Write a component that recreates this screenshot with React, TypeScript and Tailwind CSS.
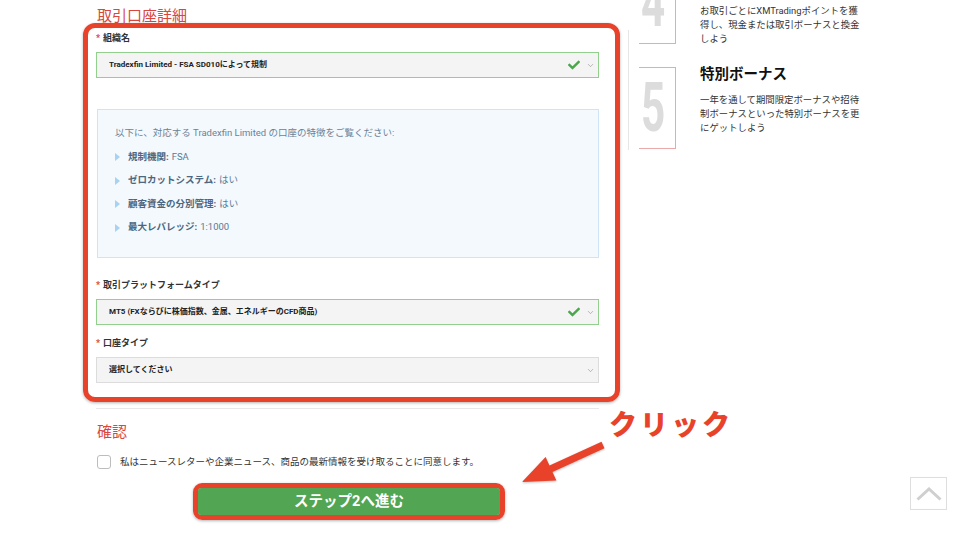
import React from 'react';
import { FaCheck } from 'react-icons/fa';
import { ChevronDown } from 'lucide-react';

const Label: React.FC<{ text: string }> = ({ text }) => (
  <div className="text-[9px] leading-[16px] font-bold text-[#333]">
    <span className="text-[#d9463e] mr-[3px]">*</span>
    {text}
  </div>
);

const Select: React.FC<{ text: string; valid?: boolean }> = ({ text, valid }) => (
  <div
    className={`h-[26px] flex items-center pl-[12px] pr-[3px] bg-[#f4f4f4] border ${
      valid ? 'border-[#94d08d]' : 'border-[#dcdcdc]'
    }`}
  >
    <span className="flex-1 text-[8px] font-bold text-[#222] truncate">{text}</span>
    {valid && <FaCheck className="text-[#4ca64c] mr-[6px]" size={12} />}
    <ChevronDown className="text-[#888]" size={9} strokeWidth={1.5} />
  </div>
);

const Feature: React.FC<{ label: string; value: string }> = ({ label, value }) => (
  <div className="flex items-center h-[16px] text-[9.5px] text-[#5d7891]">
    <span className="w-0 h-0 border-y-[4px] border-y-transparent border-l-[5px] border-l-[#a7d2f2] mr-[8px]" />
    <span className="font-bold text-[#4c6781]">{label}:</span>
    <span className="ml-[3px]">{value}</span>
  </div>
);

export default function App() {
  return (
    <div className="relative w-[960px] h-[547px] overflow-hidden bg-white font-['Roboto','Noto_Sans_CJK_JP',sans-serif]">
      <div className="flex">
        {/* Left: form */}
        <div className="ml-[96px] w-[503px] shrink-0">
          <h2 className="pt-[4px] text-[15px] leading-[24px] text-[#d9463e] pl-[1px]">取引口座詳細</h2>
          <div className="mt-[2px]">
            <Label text="組織名" />
          </div>
          <div className="mt-[6px]">
            <Select text="Tradexfin Limited - FSA SD010によって規制" valid />
          </div>

          <div className="mt-[31px] ml-[1px] h-[149px] border border-[#cde5f7] bg-[#f4f9fd] pl-[17px] pt-[15px]">
            <p className="text-[9.5px] leading-[16px] text-[#6a8399]">
              以下に、対応する Tradexfin Limited の口座の特徴をご覧ください:
            </p>
            <div className="mt-[8px] flex flex-col gap-[7.5px]">
              <Feature label="規制機関" value="FSA" />
              <Feature label="ゼロカットシステム" value="はい" />
              <Feature label="顧客資金の分別管理" value="はい" />
              <Feature label="最大レバレッジ" value="1:1000" />
            </div>
          </div>

          <div className="mt-[19px]">
            <Label text="取引プラットフォームタイプ" />
          </div>
          <div className="mt-[6px]">
            <Select text="MT5 (FXならびに株価指数、金属、エネルギーのCFD商品)" valid />
          </div>
          <div className="mt-[10px]">
            <Label text="口座タイプ" />
          </div>
          <div className="mt-[6px]">
            <Select text="選択してください" />
          </div>

          <div className="mt-[25px] border-t border-[#e8e8e8]" />

          <h2 className="mt-[13px] pl-[1px] text-[15px] leading-[20px] text-[#d9463e]">確認</h2>
          <div className="mt-[13px] flex items-center h-[14px] pl-[1px]">
            <span className="w-[14px] h-[14px] border border-[#bdbdbd] rounded-[3px] bg-white shrink-0" />
            <span className="ml-[9px] text-[9.5px] text-[#333]">
              私はニュースレターや企業ニュース、商品の最新情報を受け取ることに同意します。
            </span>
          </div>

          <div className="mt-[14px] ml-[97px] w-[312px] border-[5px] border-[#e8432a] rounded-[9px] shadow-[0_1px_3px_rgba(0,0,0,0.3)]">
            <button className="w-full h-[27px] bg-[#52a552] rounded-[3px] text-white text-[14.5px] font-bold flex items-center justify-center">
              ステップ2へ進む
            </button>
          </div>
        </div>

        {/* Right: steps */}
        <div className="relative ml-[29px] w-[260px]">
          <div className="absolute left-0 top-[30px] h-[120px] w-px bg-[#e6e6e6]" />
          <div className="pl-[11px]">
            <div className="flex h-[82px] mt-[-38px]">
              <div className="w-[37px] h-[82px] shrink-0 border-y border-r border-[#eaa9a9] pt-[16px] overflow-hidden">
                <div className="text-[68px] leading-[49px] font-bold text-[#dcdcdc] scale-x-[0.62] origin-left ml-[2px] font-['Roboto']">4</div>
              </div>
              <div className="ml-[24px] pt-[42px] text-[9.4px] leading-[14px] text-[#333]">
                お取引ごとにXMTradingポイントを獲<br />
                得し、現金または取引ボーナスと換金<br />
                しよう
              </div>
            </div>
            <div className="flex h-[82px] mt-[23px]">
              <div className="w-[37px] h-[82px] shrink-0 border-y border-r border-[#eaa9a9] pt-[16px] overflow-hidden">
                <div className="text-[68px] leading-[49px] font-bold text-[#dcdcdc] scale-x-[0.62] origin-left ml-[2px] font-['Roboto']">5</div>
              </div>
              <div className="ml-[24px]">
                <div className="mt-[-2px] text-[14.5px] leading-[20px] font-bold text-[#111]">特別ボーナス</div>
                <div className="mt-[8px] text-[9.4px] leading-[14px] text-[#333]">
                  一年を通して期間限定ボーナスや招待<br />
                  制ボーナスといった特別ボーナスを更<br />
                  にゲットしよう
                </div>
              </div>
            </div>
          </div>
        </div>
      </div>

      {/* Annotation: red frame around form */}
      <div className="absolute left-[83px] top-[23px] w-[537px] h-[379px] border-[5px] border-[#e8432a] rounded-[12px] shadow-[0_1px_3px_rgba(0,0,0,0.3)] pointer-events-none" />

      {/* Annotation: click label + arrow */}
      <div className="absolute left-[609px] top-[408px] text-[28px] leading-[36px] font-black tracking-[3px] text-[#e8432a]">
        クリック
      </div>
      <svg className="absolute left-0 top-0 pointer-events-none" width="960" height="547" viewBox="0 0 960 547">
        <polygon
          points="601.5,441.8 549.5,465.5 545.6,456.9 522,482 556.4,480.5 552.5,471.9 604.5,448.2"
          fill="#e8432a"
          style={{ filter: 'drop-shadow(0 1px 1px rgba(0,0,0,0.25))' }}
        />
      </svg>

      {/* Scroll to top */}
      <div className="absolute left-[910px] top-[477px] w-[37px] h-[33px] border border-[#dedede] bg-white flex items-center justify-center">
        <svg width="26" height="14" viewBox="0 0 26 14">
          <polyline points="1.5,12.5 13,2 24.5,12.5" fill="none" stroke="#cfcfcf" strokeWidth="3" />
        </svg>
      </div>
    </div>
  );
}
